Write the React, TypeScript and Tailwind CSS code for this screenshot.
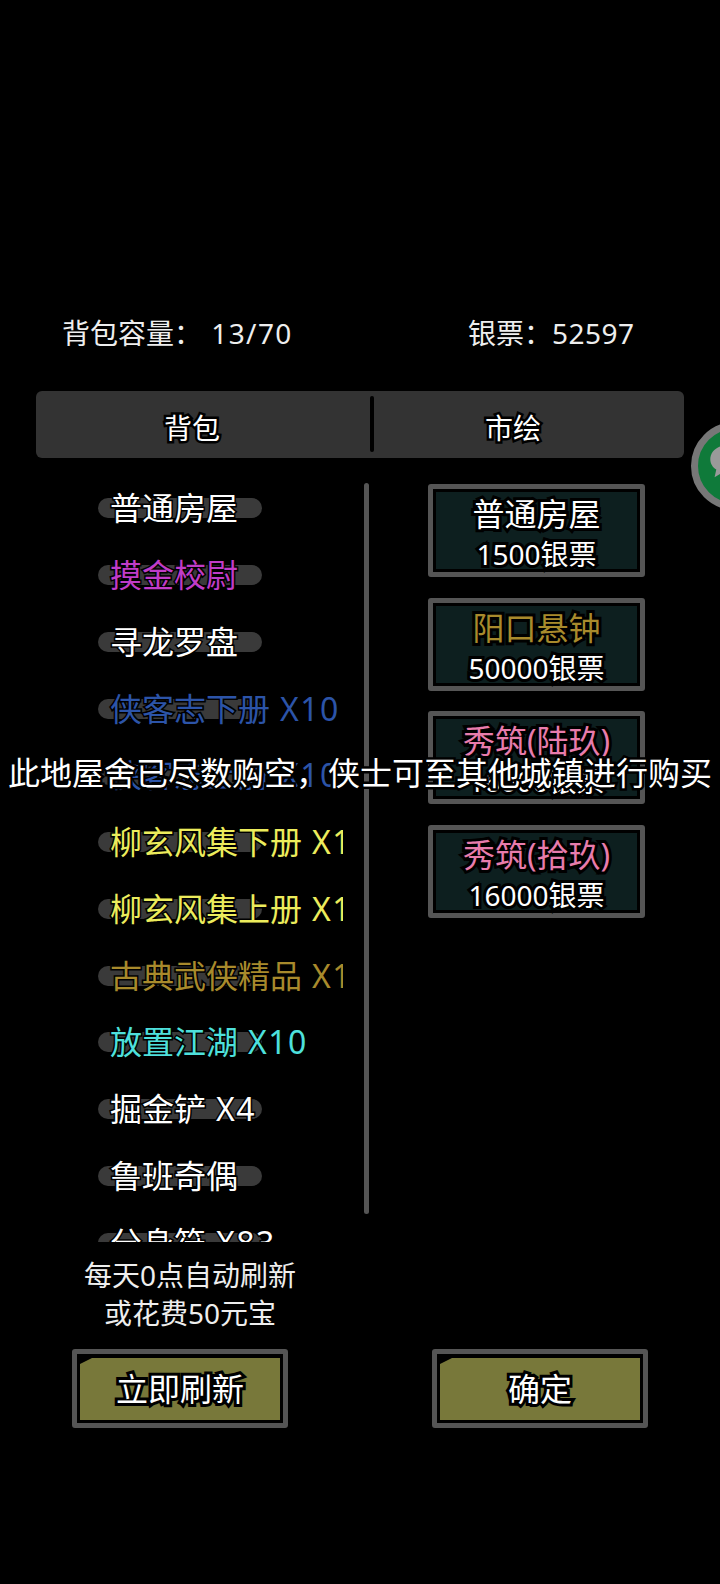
const FONT = "font-['Noto_Sans','Noto_Sans_CJK_SC',sans-serif]";
const OUTLINE = "[-webkit-text-stroke:6px_#000] [paint-order:stroke_fill]";

const bagItems = [
  { name: "普通房屋", color: "text-white" },
  { name: "摸金校尉", color: "text-[#c03cc8]" },
  { name: "寻龙罗盘", color: "text-white" },
  { name: "侠客志下册", count: "X10", color: "text-[#2c54a8]" },
  { name: "侠客志上册", count: "X10", color: "text-[#2c54a8]" },
  { name: "柳玄风集下册", count: "X10", color: "text-[#ecec5c]" },
  { name: "柳玄风集上册", count: "X10", color: "text-[#ecec5c]" },
  { name: "古典武侠精品", count: "X10", color: "text-[#a88a2c]" },
  { name: "放置江湖", count: "X10", color: "text-[#4ee0dc]" },
  { name: "掘金铲", count: "X4", color: "text-white" },
  { name: "鲁班奇偶", color: "text-white" },
  { name: "分身符", count: "X83", color: "text-white" },
];

const shopItems = [
  { name: "普通房屋", price: "1500银票", color: "text-white" },
  { name: "阳口悬钟", price: "50000银票", color: "text-[#a88a2c]" },
  { name: "秀筑(陆玖)", price: "16000银票", color: "text-[#e87cac]" },
  { name: "秀筑(拾玖)", price: "16000银票", color: "text-[#e87cac]" },
];

function BagRow({ name, count, color }: { name: string; count?: string; color: string }) {
  return (
    <div className="grid h-[66.75px] shrink-0 items-center">
      <div className="col-start-1 row-start-1 h-5 w-[164px] rounded-full bg-[#3a3a3a]" />
      <span
        className={`col-start-1 row-start-1 ml-[12px] whitespace-nowrap text-[32px] leading-10 [-webkit-text-stroke:3px_#000] [paint-order:stroke_fill] ${color}`}
      >
        {name}
        {count && <span className="ml-[10px] tracking-[1.5px]">{count}</span>}
      </span>
    </div>
  );
}

function ShopCard({ name, price, color }: { name: string; price: string; color: string }) {
  return (
    <div className="h-[93px] rounded-[3px] border-[5px] border-[#555] bg-black p-[3px]">
      <div className="flex h-full flex-col items-center bg-[#0d1f1f] pt-[2px]">
        <span className={`text-[32px] leading-10 ${OUTLINE} ${color}`}>{name}</span>
        <span className={`mt-[2px] text-[28px] leading-9 text-white ${OUTLINE}`}>{price}</span>
      </div>
    </div>
  );
}

function OliveButton({ label, className }: { label: string; className: string }) {
  return (
    <div className={`h-[79px] w-[216px] rounded-[3px] border-[5px] border-[#555] bg-black px-[3px] pb-[3px] pt-[4px] ${className}`}>
      <div className="flex h-full items-center justify-center bg-[#78783a] [clip-path:polygon(12px_0,100%_0,100%_100%,0_100%,0_6px)]">
        <span className={`text-[32px] leading-10 text-white ${OUTLINE}`}>{label}</span>
      </div>
    </div>
  );
}

export default function App() {
  return (
    <div className={`relative flex h-[1584px] w-[720px] flex-col overflow-hidden bg-black text-white ${FONT}`}>
      <div className="mt-[310px] flex h-[46px] items-center text-[28px] leading-[46px] text-[#eee]">
        <span className="ml-[62px] w-[406px]">
          背包容量： <span className="ml-[2px] tracking-[1.4px]">13/70</span>
        </span>
        <span>
          银票：<span className="tracking-[0.5px]">52597</span>
        </span>
      </div>

      <div className="ml-9 mt-[35px] flex h-[66.5px] w-[648px] items-center rounded-md bg-[#333]">
        <div className="w-[334px] pr-[22px] pt-[7px] text-center text-[28px] leading-10 [-webkit-text-stroke:5px_#000] [paint-order:stroke_fill]">
          背包
        </div>
        <div className="h-[56px] w-1 rounded-full bg-black" />
        <div className="flex-1 pr-[32px] pt-[7px] text-center text-[28px] leading-10 [-webkit-text-stroke:5px_#000] [paint-order:stroke_fill]">
          市绘
        </div>
      </div>

      <div className="mt-[17.5px] flex h-[767px] pl-[98px]">
        <div className="flex h-full w-[245px] flex-col overflow-hidden">
          {bagItems.map((item) => (
            <BagRow key={item.name} {...item} />
          ))}
        </div>
        <div className="ml-[21px] mt-2 h-[731px] w-[5px] rounded-full bg-[#555]" />
        <div className="ml-[59px] mt-[9px] flex w-[217px] flex-col gap-[20.6px]">
          {shopItems.map((item) => (
            <ShopCard key={item.name} {...item} />
          ))}
        </div>
      </div>

      <div className="ml-[60px] mt-[14px] w-[260px] text-center text-[28px] leading-[38px] text-[#eee]">
        <p>每天0点自动刷新</p>
        <p>或花费50元宝</p>
      </div>

      <div className="mt-[17px] flex">
        <OliveButton label="立即刷新" className="ml-[72px]" />
        <OliveButton label="确定" className="ml-[144px]" />
      </div>

      <div className="absolute left-0 top-[753px] w-[720px] text-center text-[32px] leading-10 [-webkit-text-stroke:5px_#000] [paint-order:stroke_fill]">
        此地屋舍已尽数购空，侠士可至其他城镇进行购买
      </div>

      <div className="absolute left-[691px] top-[422px] flex h-[88px] w-[88px] items-center rounded-full border-[7px] border-[#777] bg-[#0f7a3a]">
        <svg width="44" height="36" viewBox="0 0 48 42" className="-mt-[11px] ml-[10px] shrink-0">
          <path
            d="M24 2C11 2 1 9 1 19c0 5 3 10 7 12l-2 9 10-6c3 1 5 1 8 1 13 0 23-7 23-16S37 2 24 2z"
            fill="#9a9a9a"
          />
        </svg>
      </div>
    </div>
  );
}
